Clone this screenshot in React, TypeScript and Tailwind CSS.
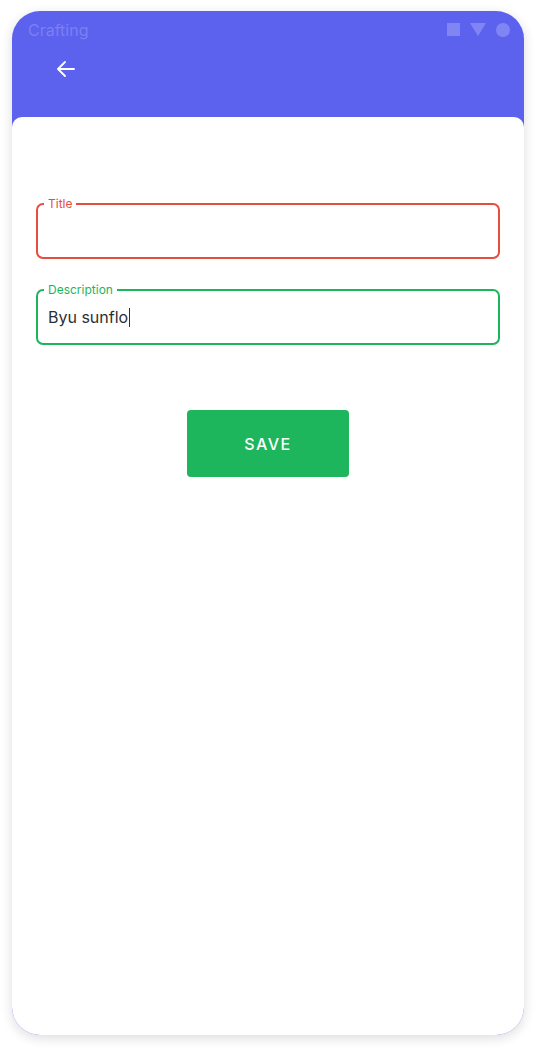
import React from "react";

export default function App() {
  return (
    <div className="w-[536px] h-[1048px] bg-white pt-[11px] pl-[12px]" style={{ fontFamily: "Inter, 'Noto Sans', sans-serif" }}>
      <div className="w-[512px] h-[1024px] rounded-[28px] overflow-hidden bg-[#5d62ee] shadow-[0_3px_12px_rgba(0,0,0,0.14)] flex flex-col">
        {/* status bar */}
        <div className="h-[36px] flex items-center justify-between pl-[16px] pr-[14px] pt-[1px]">
          <span className="text-[16px] text-[#7b7ff2] leading-none">Crafting</span>
          <div className="flex items-center gap-[10px]">
            <div className="w-[13px] h-[13px] bg-[#8185f3]" />
            <svg width="16" height="13" viewBox="0 0 16 13"><polygon points="0,0 16,0 8,13" fill="#8185f3" /></svg>
            <div className="w-[14px] h-[14px] rounded-full bg-[#8185f3]" />
          </div>
        </div>
        {/* toolbar */}
        <div className="h-[70px] flex items-start pl-[42px] pt-[10px]">
          <svg width="24" height="24" viewBox="0 0 24 24" fill="none" stroke="white" strokeWidth="1.8" strokeLinecap="round" strokeLinejoin="round">
            <path d="M20 12H4.5" />
            <path d="M11 5l-7 7 7 7" />
          </svg>
        </div>
        {/* card */}
        <div className="flex-1 bg-white rounded-t-[10px] px-[24px] pt-[86px] flex flex-col">
          <div className="relative h-[56px] border-2 border-[#e74c3c] rounded-[7px]">
            <span className="absolute -top-[9px] left-[6px] px-[4px] bg-white text-[12px] leading-[15px] text-[#e74c3c]">Title</span>
          </div>
          <div className="relative h-[56px] mt-[30px] border-2 border-[#1db55c] rounded-[7px] flex items-center pl-[10px]">
            <span className="absolute -top-[9px] left-[6px] px-[4px] bg-white text-[12px] leading-[15px] text-[#1db55c]">Description</span>
            <span className="text-[16px] text-[#2b3036] leading-none">Byu sunflo</span>
            <span className="w-[1px] h-[19px] bg-[#2b3036] ml-[1px]" />
          </div>
          <div className="flex justify-center mt-[65px]">
            <button className="w-[162px] h-[67px] bg-[#1db65c] rounded-[4px] text-white text-[16px] font-medium tracking-[1.5px]">SAVE</button>
          </div>
        </div>
      </div>
    </div>
  );
}
